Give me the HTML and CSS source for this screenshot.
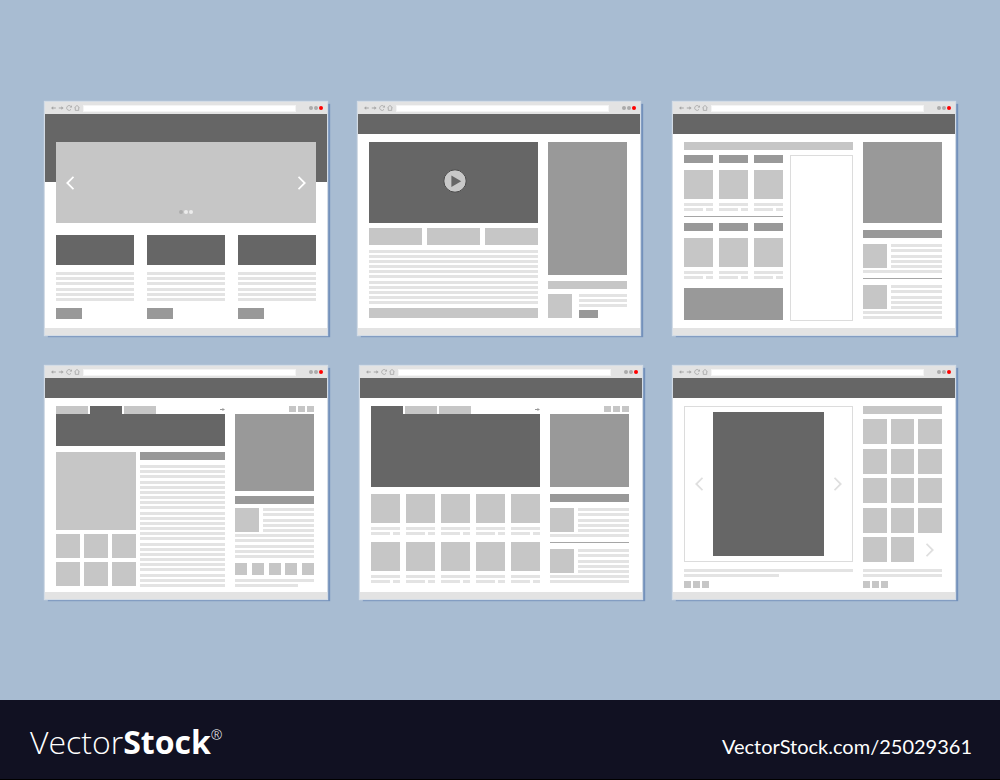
FILE: index.html
```html
<!DOCTYPE html>
<html lang="en">
<head>
<meta charset="utf-8">
<meta name="viewport" content="width=device-width, initial-scale=1">
<title>Website wireframe templates</title>
<link rel="stylesheet" href="styles.css">
</head>
<body>
<svg class="sprite" aria-hidden="true">
  <symbol id="back" viewBox="0 0 6 8"><path d="M1 4l2.2-1.8v1.3h2.6v1H3.2v1.3z" fill="#a6a6a6"/></symbol>
  <symbol id="forward" viewBox="0 0 6 8"><path d="M5.6 4L3.4 2.2v1.3H.8v1h2.6v1.3z" fill="#a6a6a6"/></symbol>
  <symbol id="reload" viewBox="0 0 6 8"><path d="M4.8 2.3A2.4 2.4 0 1 0 5 5.4" fill="none" stroke="#a6a6a6" stroke-width=".8"/><path d="M5.9 1.2v2.4H3.6z" fill="#a6a6a6"/></symbol>
  <symbol id="home" viewBox="0 0 6 8"><path d="M3 1.4L.7 3.6h.6v2.8h3.4V3.6h.6z" fill="none" stroke="#a6a6a6" stroke-width=".8"/></symbol>
  <symbol id="prev" viewBox="0 0 8 14"><path d="M7.5 .8L1.3 7l6.2 6.2" fill="none" stroke="currentColor" stroke-width="1.8"/></symbol>
  <symbol id="next" viewBox="0 0 8 14"><path d="M.5 .8L6.7 7l-6.2 6.2" fill="none" stroke="currentColor" stroke-width="1.8"/></symbol>
  <symbol id="more" viewBox="0 0 5 3"><path d="M0 1h2.4V0L5 1.5 2.4 3V2H0z" fill="#999"/></symbol>
</svg>

<main class="stage">
  <div class="row row-top">
    <section class="window">
      <div class="toolbar">
        <button class="nav" aria-label="Back"><svg><use href="#back"/></svg></button><button class="nav" aria-label="Forward"><svg><use href="#forward"/></svg></button><button class="nav" aria-label="Reload"><svg><use href="#reload"/></svg></button><button class="nav" aria-label="Home"><svg><use href="#home"/></svg></button>
        <input class="url" type="text" aria-label="Address">
        <div class="lights"><i></i><i></i><i></i></div>
      </div>
      <div class="landing">
        <div class="carousel">
          <button class="arrow" aria-label="Previous"><svg><use href="#prev"/></svg></button>
          <div class="pager"><i></i><i></i><i></i></div>
          <button class="arrow" aria-label="Next"><svg><use href="#next"/></svg></button>
        </div>
        <div class="features">
          <article class="feature"><div class="feature-head"></div><div class="lines"><i></i><i></i><i></i><i></i><i></i><i></i></div><button class="action" aria-label="Read more"></button></article>
          <article class="feature"><div class="feature-head"></div><div class="lines"><i></i><i></i><i></i><i></i><i></i><i></i></div><button class="action" aria-label="Read more"></button></article>
          <article class="feature"><div class="feature-head"></div><div class="lines"><i></i><i></i><i></i><i></i><i></i><i></i></div><button class="action" aria-label="Read more"></button></article>
        </div>
      </div>
      <div class="status"></div>
    </section>

    <section class="window">
      <div class="toolbar">
        <button class="nav" aria-label="Back"><svg><use href="#back"/></svg></button><button class="nav" aria-label="Forward"><svg><use href="#forward"/></svg></button><button class="nav" aria-label="Reload"><svg><use href="#reload"/></svg></button><button class="nav" aria-label="Home"><svg><use href="#home"/></svg></button>
        <input class="url" type="text" aria-label="Address">
        <div class="lights"><i></i><i></i><i></i></div>
      </div>
      <div class="masthead"></div>
      <div class="page">
        <div class="main">
          <div class="video">
            <button class="play" aria-label="Play"><svg viewBox="0 0 24 24"><circle cx="12" cy="12" r="11.2" fill="#c8c8c8" stroke="#484848"/><path d="M8.4 6.4v11.6L18.2 12.2z" fill="#666"/></svg></button>
          </div>
          <div class="thirds"><div class="light"></div><div class="light"></div><div class="light"></div></div>
          <div class="lines article-lines"><i></i><i></i><i></i><i></i><i></i><i></i><i></i><i></i><i></i><i></i><i></i></div>
          <div class="light article-foot"></div>
        </div>
        <aside class="side">
          <div class="mid tower"></div>
          <div class="light bar tower-bar"></div>
          <div class="teaser">
            <div class="light thumb"></div>
            <div class="teaser-text"><div class="lines teaser-lines"><i></i><i></i><i></i></div><button class="action small" aria-label="Read more"></button></div>
          </div>
        </aside>
      </div>
      <div class="status"></div>
    </section>

    <section class="window">
      <div class="toolbar">
        <button class="nav" aria-label="Back"><svg><use href="#back"/></svg></button><button class="nav" aria-label="Forward"><svg><use href="#forward"/></svg></button><button class="nav" aria-label="Reload"><svg><use href="#reload"/></svg></button><button class="nav" aria-label="Home"><svg><use href="#home"/></svg></button>
        <input class="url" type="text" aria-label="Address">
        <div class="lights"><i></i><i></i><i></i></div>
      </div>
      <div class="masthead"></div>
      <div class="page">
        <div class="main">
          <div class="light bar"></div>
          <div class="catalog">
            <div class="catalog-list">
              <div class="products three">
                <div class="product"><div class="mid bar label"></div><div class="light shot"></div><i></i><div class="price"><i></i><i></i></div></div>
                <div class="product"><div class="mid bar label"></div><div class="light shot"></div><i></i><div class="price"><i></i><i></i></div></div>
                <div class="product"><div class="mid bar label"></div><div class="light shot"></div><i></i><div class="price"><i></i><i></i></div></div>
              </div>
              <hr class="rule">
              <div class="products three">
                <div class="product"><div class="mid bar label"></div><div class="light shot"></div><i></i><div class="price"><i></i><i></i></div></div>
                <div class="product"><div class="mid bar label"></div><div class="light shot"></div><i></i><div class="price"><i></i><i></i></div></div>
                <div class="product"><div class="mid bar label"></div><div class="light shot"></div><i></i><div class="price"><i></i><i></i></div></div>
              </div>
              <div class="mid promo"></div>
            </div>
            <div class="outline"></div>
          </div>
        </div>
        <aside class="side">
          <div class="mid square-ad"></div>
          <div class="mid bar news-bar"></div>
          <div class="news">
            <div class="item"><div class="light thumb"></div><div class="lines"><i></i><i></i><i></i><i></i><i></i></div></div>
            <i class="line"></i>
            <hr class="rule">
            <div class="item"><div class="light thumb"></div><div class="lines"><i></i><i></i><i></i><i></i><i></i></div></div>
            <i class="line"></i>
            <i class="line"></i>
          </div>
        </aside>
      </div>
      <div class="status"></div>
    </section>
  </div>

  <div class="row row-bottom">
    <section class="window">
      <div class="toolbar">
        <button class="nav" aria-label="Back"><svg><use href="#back"/></svg></button><button class="nav" aria-label="Forward"><svg><use href="#forward"/></svg></button><button class="nav" aria-label="Reload"><svg><use href="#reload"/></svg></button><button class="nav" aria-label="Home"><svg><use href="#home"/></svg></button>
        <input class="url" type="text" aria-label="Address">
        <div class="lights"><i></i><i></i><i></i></div>
      </div>
      <div class="masthead"></div>
      <div class="page">
        <div class="main">
          <div class="tabs"><button class="tab" aria-label="Tab 1"></button><button class="tab active" aria-label="Tab 2"></button><button class="tab" aria-label="Tab 3"></button><svg class="more"><use href="#more"/></svg></div>
          <div class="dark banner"></div>
          <div class="story">
            <div class="gallery">
              <div class="light cover"></div>
              <div class="thumbs"><div class="light thumb"></div><div class="light thumb"></div><div class="light thumb"></div><div class="light thumb"></div><div class="light thumb"></div><div class="light thumb"></div></div>
            </div>
            <div class="text">
              <div class="mid bar"></div>
              <div class="lines"><i></i><i></i><i></i><i></i><i></i><i></i><i></i><i></i><i></i><i></i><i></i><i></i><i></i><i></i><i></i><i></i><i></i><i></i><i></i><i></i><i></i><i></i><i></i><i></i></div>
            </div>
          </div>
        </div>
        <aside class="side">
          <div class="chips top"><i></i><i></i><i></i></div>
          <div class="mid portrait"></div>
          <div class="mid bar portrait-bar"></div>
          <div class="item"><div class="light thumb"></div><div class="lines"><i></i><i></i><i></i><i></i><i></i></div></div>
          <div class="lines bio"><i></i><i></i><i></i><i></i><i></i></div>
          <div class="socials"><i></i><i></i><i></i><i></i><i></i></div>
          <div class="lines pair"><i></i><i class="w80"></i></div>
        </aside>
      </div>
      <div class="status"></div>
    </section>

    <section class="window">
      <div class="toolbar">
        <button class="nav" aria-label="Back"><svg><use href="#back"/></svg></button><button class="nav" aria-label="Forward"><svg><use href="#forward"/></svg></button><button class="nav" aria-label="Reload"><svg><use href="#reload"/></svg></button><button class="nav" aria-label="Home"><svg><use href="#home"/></svg></button>
        <input class="url" type="text" aria-label="Address">
        <div class="lights"><i></i><i></i><i></i></div>
      </div>
      <div class="masthead"></div>
      <div class="page">
        <div class="main">
          <div class="tabs"><button class="tab active" aria-label="Tab 1"></button><button class="tab" aria-label="Tab 2"></button><button class="tab" aria-label="Tab 3"></button><svg class="more"><use href="#more"/></svg></div>
          <div class="dark feature-banner"></div>
          <div class="products five">
            <div class="product"><div class="light shot"></div><i></i><div class="price"><i></i><i></i></div></div>
            <div class="product"><div class="light shot"></div><i></i><div class="price"><i></i><i></i></div></div>
            <div class="product"><div class="light shot"></div><i></i><div class="price"><i></i><i></i></div></div>
            <div class="product"><div class="light shot"></div><i></i><div class="price"><i></i><i></i></div></div>
            <div class="product"><div class="light shot"></div><i></i><div class="price"><i></i><i></i></div></div>
            <div class="product"><div class="light shot"></div><i></i><div class="price"><i></i><i></i></div></div>
            <div class="product"><div class="light shot"></div><i></i><div class="price"><i></i><i></i></div></div>
            <div class="product"><div class="light shot"></div><i></i><div class="price"><i></i><i></i></div></div>
            <div class="product"><div class="light shot"></div><i></i><div class="price"><i></i><i></i></div></div>
            <div class="product"><div class="light shot"></div><i></i><div class="price"><i></i><i></i></div></div>
          </div>
        </div>
        <aside class="side">
          <div class="chips top"><i></i><i></i><i></i></div>
          <div class="mid feature-side"></div>
          <div class="mid bar news-bar"></div>
          <div class="news">
            <div class="item"><div class="light thumb"></div><div class="lines"><i></i><i></i><i></i><i></i><i></i></div></div>
            <i class="line"></i>
            <hr class="rule">
            <div class="item"><div class="light thumb"></div><div class="lines"><i></i><i></i><i></i><i></i><i></i></div></div>
            <i class="line"></i>
            <i class="line"></i>
          </div>
        </aside>
      </div>
      <div class="status"></div>
    </section>

    <section class="window">
      <div class="toolbar">
        <button class="nav" aria-label="Back"><svg><use href="#back"/></svg></button><button class="nav" aria-label="Forward"><svg><use href="#forward"/></svg></button><button class="nav" aria-label="Reload"><svg><use href="#reload"/></svg></button><button class="nav" aria-label="Home"><svg><use href="#home"/></svg></button>
        <input class="url" type="text" aria-label="Address">
        <div class="lights"><i></i><i></i><i></i></div>
      </div>
      <div class="masthead"></div>
      <div class="page">
        <div class="main">
          <div class="outline viewer">
            <button class="arrow pale" aria-label="Previous"><svg><use href="#prev"/></svg></button>
            <div class="dark photo"></div>
            <button class="arrow pale" aria-label="Next"><svg><use href="#next"/></svg></button>
          </div>
          <div class="lines pair caption"><i></i><i class="w56"></i></div>
          <div class="chips"><i></i><i></i><i></i></div>
        </div>
        <aside class="side">
          <div class="light bar"></div>
          <div class="album"><i></i><i></i><i></i><i></i><i></i><i></i><i></i><i></i><i></i><i></i><i></i><i></i><i></i><i></i><button class="arrow pale" aria-label="Next"><svg><use href="#next"/></svg></button></div>
          <div class="lines pair caption"><i></i><i></i></div>
          <div class="chips"><i></i><i></i><i></i></div>
        </aside>
      </div>
      <div class="status"></div>
    </section>
  </div>
</main>

<footer class="credit">
  <div class="logo">Vector<strong>Stock</strong><sup>®</sup></div>
  <div class="address">VectorStock.com/25029361</div>
</footer>
</body>
</html>
```
FILE: styles.css
```css
* { box-sizing: border-box; }

body {
  margin: 0;
  min-height: 100vh;
  display: flex;
  flex-direction: column;
  background: #a8bcd2;
  font-family: "Lato", "Open Sans", sans-serif;
}

button, input { margin: 0; padding: 0; border: 0; border-radius: 0; }
button { display: block; background: none; }
i { display: block; }
svg { display: block; }
.sprite { display: none; }

/* Stage and browser windows */
.stage {
  flex: 1;
  display: flex;
  flex-direction: column;
  gap: 31px;
  padding: 102px 45px 0;
}
.row { display: flex; gap: 31px; }
.row-top .window:nth-child(2),
.row-bottom .window:nth-child(1) { margin-right: 2px; }
.window {
  flex: 1;
  display: flex;
  flex-direction: column;
  background: #fff;
  box-shadow: 0 0 1px 1px #d3dce6, 3px 2px 1px #7391bb;
}
.toolbar {
  display: flex;
  align-items: center;
  gap: 2px;
  height: 12px;
  padding: 0 4px 0 5px;
  background: #e3e3e3;
}
.nav, .nav svg { width: 6px; height: 8px; }
.url {
  flex: 1;
  min-width: 0;
  height: 7px;
  margin: 0 11px 0 1px;
  background: #fff;
  border: 1px solid #f4f4f4;
}
.lights { display: flex; gap: 1px; }
.lights i { width: 4px; height: 4px; border-radius: 50%; background: #ababab; }
.lights i:last-child { background: #f00; }
.masthead { height: 20px; background: #666; }
.page {
  flex: 1;
  display: grid;
  grid-template-columns: 169fr 79fr;
  gap: 10px;
  min-height: 194px;
  padding: 8px 13px 4px 11px;
}
.status { height: 7px; background: #e3e3e3; }

/* Shared blocks */
.dark { background: #666; }
.mid { background: #999; }
.light { background: #c6c6c6; }
.bar { height: 8px; }
.outline { border: 1px solid #dcdcdc; }
.rule { height: 1px; margin: 5px 0 6px; border: 0; background: #a6a6a6; }
.thumb { width: 24px; height: 24px; }
.lines { display: flex; flex-direction: column; justify-content: space-between; }
.lines i, .line, .product > i, .price i { height: 3px; background: #e3e3e3; }
.pair { height: 8px; }
.w80 { width: 80%; }
.w56 { width: 56%; }
.action { width: 26px; height: 11px; background: #999; }
.action.small { width: 19px; height: 8px; }
.arrow { color: #fff; }
.arrow svg { width: 8px; height: 14px; }
.pale { color: #dfdfdf; }
.item { display: grid; grid-template-columns: 24px 1fr; gap: 4px; }
.chips { display: flex; gap: 2px; }
.chips i { width: 7px; height: 7px; background: #c6c6c6; }
.chips.top { justify-content: flex-end; height: 8px; }
.chips.top i { height: 6px; }

/* Landing page with carousel */
.landing {
  flex: 1;
  padding: 28px 11px 9px;
  background: linear-gradient(#666 68px, #fff 68px);
}
.carousel {
  display: flex;
  align-items: center;
  justify-content: space-between;
  height: 81px;
  padding: 0 10px;
  background: #c6c6c6;
}
.pager { display: flex; gap: 1px; align-self: flex-end; padding-bottom: 9px; }
.pager i { width: 4px; height: 4px; border-radius: 50%; background: #ececec; }
.pager i:first-child { background: #aeaeae; }
.features { display: grid; grid-template-columns: repeat(3, 1fr); gap: 13px; margin-top: 12px; }
.feature-head { height: 30px; background: #666; }
.feature .lines { height: 29px; margin: 7px 0; }

/* Video page */
.video {
  display: flex;
  align-items: center;
  justify-content: center;
  height: 81px;
  padding: 0 0 3px 3px;
  background: #666;
}
.play svg { width: 24px; height: 24px; }
.thirds { display: grid; grid-template-columns: repeat(3, 1fr); gap: 5px; margin: 5px 0; }
.thirds .light { height: 17px; }
.article-lines { height: 54px; margin-bottom: 4px; }
.article-foot { height: 10px; }
.tower { height: 133px; }
.tower-bar { margin: 6px 0 5px; }
.teaser { display: grid; grid-template-columns: 24px 1fr; gap: 7px; }
.teaser-lines { height: 13px; margin-bottom: 3px; }

/* Catalog page */
.catalog { display: grid; grid-template-columns: 99fr 63fr; gap: 7px; height: 166px; margin-top: 5px; }
.products { display: grid; column-gap: 6px; row-gap: 7px; }
.three { grid-template-columns: repeat(3, 1fr); }
.five { grid-template-columns: repeat(5, 1fr); margin-top: 7px; }
.label { margin-bottom: 7px; }
.shot { height: 29px; margin-bottom: 4px; }
.price { display: grid; grid-template-columns: 19fr 7fr; gap: 3px; margin-top: 2px; }
.promo { height: 32px; margin-top: 9px; }
.square-ad { height: 81px; }
.news-bar { margin: 7px 0 6px; }
.news .line { margin-top: 2px; }

/* Story page */
.tabs { display: flex; gap: 2px; height: 8px; }
.tab { width: 32px; background: #c6c6c6; }
.tab.active { background: #666; }
.more { width: 5px; height: 3px; margin: 2px 0 0 auto; }
.banner { height: 32px; }
.story { display: grid; grid-template-columns: 80px 1fr; gap: 4px; margin-top: 6px; }
.cover { height: 78px; margin-bottom: 4px; }
.thumbs { display: grid; grid-template-columns: repeat(3, 24px); gap: 4px; }
.text .lines { height: 122px; margin-top: 5px; }
.portrait { height: 77px; }
.portrait-bar { margin: 5px 0 4px; }
.bio { height: 24px; margin: 2px 0 5px; }
.socials { display: flex; justify-content: space-between; margin-bottom: 4px; }
.socials i { width: 12px; height: 12px; background: #c6c6c6; }

/* Shop page */
.feature-banner, .feature-side { height: 73px; }

/* Photo viewer page */
.viewer {
  display: flex;
  align-items: center;
  justify-content: space-between;
  height: 156px;
  padding: 0 10px;
}
.photo { width: 111px; height: 144px; }
.caption { margin: 7px 0 4px; }
.album {
  display: grid;
  grid-template-columns: repeat(3, 1fr);
  grid-auto-rows: 25px;
  column-gap: 4px;
  align-content: space-between;
  height: 143px;
  margin-top: 5px;
}
.album i { background: #c6c6c6; }
.album .arrow { place-self: center; }

/* Credit strip */
.credit {
  display: flex;
  align-items: center;
  justify-content: space-between;
  height: 80px;
  padding: 0 28px 0 30px;
  background: #111122;
  border-bottom: 1px solid #000;
  color: #fff;
}
.logo { padding-top: 4px; font-family: "Open Sans", sans-serif; font-size: 32px; font-weight: 300; line-height: 40px; }
.logo strong { font-weight: 700; }
.logo sup { font-size: 14px; line-height: 14px; vertical-align: 14px; }
.address { padding-top: 12px; font-size: 20px; line-height: 24px; }
```
